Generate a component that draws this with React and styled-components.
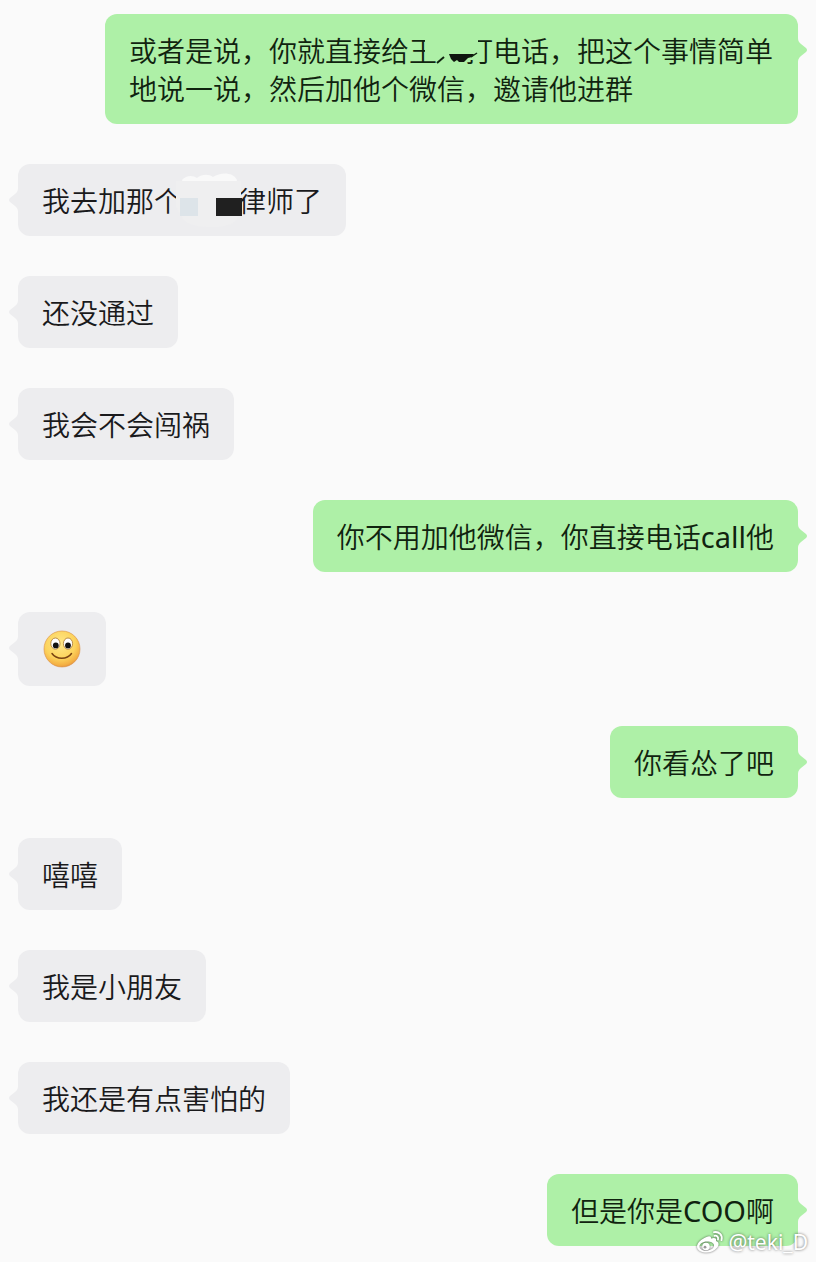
import React from 'react'
import styled, { createGlobalStyle, css } from 'styled-components'

const messages = [
    { id: 1, mine: true, kind: 'call' },
    { id: 2, kind: 'lawyer' },
    { id: 3, text: '还没通过' },
    { id: 4, text: '我会不会闯祸' },
    { id: 5, mine: true, text: '你不用加他微信，你直接电话call他' },
    { id: 6, kind: 'smile' },
    { id: 7, mine: true, text: '你看怂了吧' },
    { id: 8, text: '嘻嘻' },
    { id: 9, text: '我是小朋友' },
    { id: 10, text: '我还是有点害怕的' },
    { id: 11, mine: true, text: '但是你是COO啊' },
]

function Smile() {
    return (
        <Emoji viewBox="-1 -1 40 40" role="img" aria-label="微笑">
            <defs>
                <radialGradient id="face" cx="0.45" cy="0.35" r="0.7">
                    <stop offset="0" stopColor="#ffe88a" />
                    <stop offset="0.6" stopColor="#fcd35c" />
                    <stop offset="0.85" stopColor="#f4b044" />
                    <stop offset="1" stopColor="#e08a3a" />
                </radialGradient>
            </defs>
            <circle cx="19" cy="19" r="18" fill="url(#face)" stroke="#d98f48" strokeWidth="0.6" />
            <ellipse cx="12.4" cy="13.6" rx="4.6" ry="5.6" fill="#fff" stroke="#a8742c" strokeWidth="0.8" />
            <ellipse cx="25" cy="13.6" rx="4.6" ry="5.6" fill="#fff" stroke="#a8742c" strokeWidth="0.8" />
            <circle cx="12.8" cy="15.4" r="2.9" fill="#111" />
            <circle cx="25" cy="15.4" r="2.9" fill="#111" />
            <path d="M9 23.5c4.5 6.4 15 6.4 19.500 0" fill="none" stroke="#7a4312" strokeWidth="1.5" strokeLinecap="round" />
        </Emoji>
    )
}

function CallText() {
    return (
        <>
            或者是说，你就直接给王
            <Blank $chars={1}>
                <Scribble viewBox="0 0 84 38" aria-hidden="true">
                    <path d="M16 3h53v17l-5 9H28l-1-1H16z" fill="#aef0a7" />
                    <path d="M35 26l-7 6" stroke="#10230f" strokeWidth="2" />
                    <path d="M40 23h25l-2 3-4 1-4 4h-5l-2-2-3 2-3-3z" fill="#10150f" />
                    <path d="M62 26l6-4" stroke="#10230f" strokeWidth="1.500" />
                </Scribble>
            </Blank>
            打电话，把这个事情简单地说一说，然后加他个微信，邀请他进群
        </>
    )
}

function LawyerText() {
    return (
        <>
            我去加那个
            <Blank $chars={2}>
                <Smudge viewBox="0 0 76 60" aria-hidden="true">
                    <path d="M10 10c4-5 11-5 15-2 5-4 12-4 16-1 8-5 20-5 24 3l-2 8H12z" fill="#f9f9f9" />
                    <path d="M4 11h65v18l-4 20q-6 8-24 8-24 0-30-8l-7-12z" fill="#efeff0" />
                    <rect x="8" y="28" width="18" height="18" fill="#dde4e9" />
                    <rect x="44" y="28" width="26" height="18" fill="#202020" />
                </Smudge>
            </Blank>
            律师了
        </>
    )
}

function Content({ message }) {
    if (message.kind === 'call') return <CallText />
    if (message.kind === 'lawyer') return <LawyerText />
    if (message.kind === 'smile') return <Smile />
    return message.text.split(/([a-z]+)/i).map((part, i) => (
        i % 2 ? <Latin key={i}>{part}</Latin> : part
    ))
}

function Watermark() {
    return (
        <Mark>
            <svg width="28" height="24" viewBox="0 0 28 24" aria-hidden="true">
                <path
                    fillRule="evenodd"
                    d="M10.5 7c2-1.200 5-1.500 4.500 1.500 3-1.200 6-.8 5 2.500 3 1 3.500 4 1 6.700C17.500 21.500 13 23 9 22.500 4 22 1 19.500 1 16.500 1 13 6 8.500 10.500 7zM11 11.500c-4.500 0-7.500 2.500-7.500 5s3 4.500 7 4.200c4.500-.3 7.500-2.700 7.500-5.200s-3-4-7-4z"
                    fill="#fff"
                />
                <circle cx="10" cy="16.5" r="3.8" fill="#fff" />
                <circle cx="9" cy="17.2" r="1.4" fill="#999" />
                <path d="M18 2.2c5-1 9 3 7.500 8M18.500 5.800c2.500-.5 4.200 1.500 3.500 3.800" fill="none" stroke="#fff" strokeWidth="1.8" strokeLinecap="round" />
            </svg>
            @teki_D
        </Mark>
    )
}

export default function App() {
    return (
        <>
            <GlobalStyle />
            <Chat>
                {messages.map((message) => (
                    <Row key={message.id} $mine={message.mine}>
                        <Bubble $mine={message.mine}>
                            <Tail viewBox="0 0 10 24" $mine={message.mine} aria-hidden="true">
                                <path d="M0 0c0 3 1 4 3 6l5 4q2 2 0 4l-5 4c-2 2-3 3-3 6z" />
                            </Tail>
                            <Content message={message} />
                        </Bubble>
                    </Row>
                ))}
                <Watermark />
            </Chat>
        </>
    )
}

const GlobalStyle = createGlobalStyle`
    body {
        margin: 0;
        background-color: #fafafa;
    }
`;
const Chat = styled.main`
    position: relative;
    display: flex;
    flex-direction: column;
    gap: 40px;
    padding: 14px 18px 16px;
    color: #1a1a1c;
    font-family: "Noto Sans CJK SC", sans-serif;
    font-size: 28px;
    line-height: 38px;
`;
const Row = styled.div`
    display: flex;
    justify-content: ${(props) => (props.$mine ? 'flex-end' : 'flex-start')};
`;
const Bubble = styled.div`
    position: relative;
    box-sizing: border-box;
    max-width: 693px;
    padding: 17px 24px;
    border-radius: 12px;
    background-color: #ededef;
    font-weight: 350;

    ${(props) => props.$mine && css`
        background-color: #aef0a7;
        color: #10230f;
    `}
`;
const Tail = styled.svg`
    position: absolute;
    top: 24px;
    width: 10px;
    height: 24px;
    fill: ${(props) => (props.$mine ? '#aef0a7' : '#ededef')};
    ${(props) => (props.$mine ? 'left: 100%;' : 'right: 100%; transform: scaleX(-1);')}
`;
const Latin = styled.span`
    font-family: "Noto Sans", sans-serif;
    font-size: 29px;
    font-weight: 400;
    line-height: 1;
`;
const Emoji = styled.svg`
    display: block;
    width: 40px;
    height: 40px;
`;
const Blank = styled.span`
    position: relative;
    display: inline-block;
    width: ${(props) => props.$chars}em;
    height: 38px;
    vertical-align: top;
`;
const Scribble = styled.svg`
    position: absolute;
    top: 0;
    left: -28px;
    width: 84px;
    height: 38px;
`;
const Smudge = styled.svg`
    position: absolute;
    top: -11px;
    left: -10px;
    width: 76px;
    height: 60px;
`;
const Mark = styled.div`
    position: absolute;
    right: 8px;
    bottom: 8px;
    display: flex;
    align-items: center;
    gap: 4px;
    color: #fff;
    font-family: "Noto Sans", sans-serif;
    font-size: 21px;
    line-height: 24px;
    text-shadow: 0 0 3px rgba(0, 0, 0, 0.6);

    svg {
        filter: drop-shadow(0 0 1px rgba(0, 0, 0, 0.6));
    }
`;
